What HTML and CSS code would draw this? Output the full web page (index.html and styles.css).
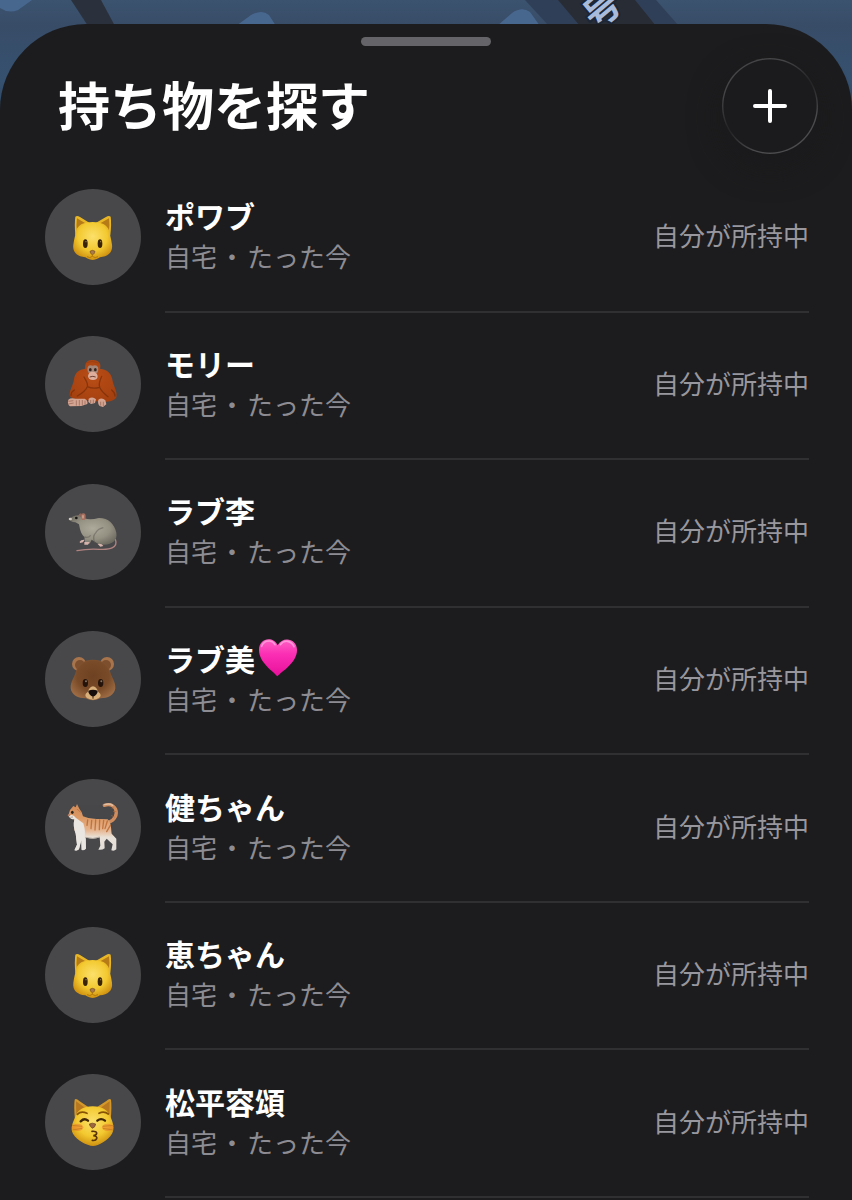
FILE: index.html
```html
<!DOCTYPE html>
<html lang="ja">
<head>
<meta charset="utf-8">
<meta name="viewport" content="width=device-width, initial-scale=1">
<title>持ち物を探す</title>
<link rel="stylesheet" href="styles.css">
</head>
<body>
<svg class="defs" aria-hidden="true">
  <defs>
    <radialGradient id="gold" cx=".5" cy=".38" r=".62"><stop offset="0" stop-color="#fbe06a"/><stop offset=".6" stop-color="#f3c930"/><stop offset="1" stop-color="#cf900f"/></radialGradient>
    <radialGradient id="brown" cx=".5" cy=".4" r=".6"><stop offset="0" stop-color="#6d4122"/><stop offset=".6" stop-color="#7a4b28"/><stop offset="1" stop-color="#9c6b44"/></radialGradient>
    <radialGradient id="rust" cx=".5" cy=".4" r=".65"><stop offset="0" stop-color="#b94d16"/><stop offset="1" stop-color="#a4400f"/></radialGradient>
    <radialGradient id="fur" cx=".5" cy=".45" r=".6"><stop offset="0" stop-color="#aeaa9b"/><stop offset=".6" stop-color="#949082"/><stop offset="1" stop-color="#6d6a60"/></radialGradient>
    <linearGradient id="pink" x1="0" y1="0" x2="0" y2="1"><stop offset="0" stop-color="#ff62c5"/><stop offset=".4" stop-color="#fb2fb4"/><stop offset="1" stop-color="#e80f9c"/></linearGradient>
    <linearGradient id="ginger" x1="0" y1="0" x2="0" y2="1"><stop offset="0" stop-color="#d08a58"/><stop offset=".3" stop-color="#dd9a66"/><stop offset=".55" stop-color="#e6b48c"/><stop offset=".72" stop-color="#e9e2da"/><stop offset="1" stop-color="#e2ddd7"/></linearGradient>
  </defs>

  <symbol id="cat-face" viewBox="16 27 288 288">
    <path d="M107 110Q112 105 121 111L150 129L134 160L107 166Q104 130 107 110Z M213 110Q208 105 199 111L168 129L185 160L212 166Q216 130 213 110Z" fill="#e9b726"/>
    <path d="M112 115L141 132L112 158Q109 133 112 115Z M208 115L178 132L207 158Q211 133 208 115Z" fill="#b67b17"/>
    <path d="M159 126C186 126 202 134 208 151C211 166 215 177 217 194C220 219 204 229 181 232C172 238 165 240 159 240C153 240 146 238 137 232C113 229 98 218 101 194C103 177 107 166 110 151C116 134 132 126 159 126Z" fill="url(#gold)"/>
    <ellipse cx="137" cy="191" rx="7" ry="13" fill="#382306"/><ellipse cx="181" cy="191" rx="7" ry="13" fill="#382306"/>
    <circle cx="139" cy="185" r="2" fill="#9c8459"/><circle cx="183" cy="185" r="2" fill="#9c8459"/>
    <path d="M151 214Q158 208 166 214Q166 222 158 224Q151 221 151 214Z" fill="#a9794b" stroke="#76501f" stroke-width="2"/>
    <path d="M158 224V229M158 229Q151 236 142 230M158 229Q166 236 175 230" fill="none" stroke="#b67a0a" stroke-width="3"/>
  </symbol>

  <symbol id="orangutan" viewBox="16 20 288 288">
    <path d="M158 92C141 91 135 103 137 118C117 120 106 130 103 150C101 168 90 180 90 198C92 208 112 212 140 212L180 217C202 220 224 216 230 204C234 188 223 174 219 156C216 132 204 121 181 118C186 102 176 91 158 92Z" fill="url(#rust)"/>
    <path d="M133 143C140 155 146 162 143 172Q137 186 113 200M186 141C180 154 176 162 180 174Q186 188 205 202M143 172Q160 180 180 174M104 182Q94 188 94 198M216 182Q226 190 226 200" fill="none" stroke="#6e2807" stroke-width="4" stroke-linecap="round" opacity=".6"/>
    <path d="M140 100Q158 92 177 101" fill="none" stroke="#8f3d14" stroke-width="3" opacity=".6"/>
    <path d="M144 114Q147 105 159 109Q171 105 175 114Q178 126 171 132L149 133Q141 126 144 114Z" fill="#a58779"/>
    <ellipse cx="152" cy="121" rx="4" ry="5" fill="#33231c"/><ellipse cx="167" cy="121" rx="4" ry="5" fill="#33231c"/>
    <path d="M145 140Q147 127 159 127Q171 127 174 140Q174 152 160 152Q146 152 145 140Z" fill="#dcae9b"/>
    <path d="M150 143Q160 139 168 143" fill="none" stroke="#6f4033" stroke-width="3"/>
    <path d="M86 211Q93 204 108 208L135 208Q146 213 143 224L125 230L91 231Q82 224 86 211ZM147 208Q159 200 169 210L166 221L154 224L146 218ZM176 211Q187 203 197 213L200 225L190 233L180 230Q173 222 176 211Z" fill="#d5a594"/>
    <path d="M86 216L101 214M86 224L102 221M110 213V229M119 212V229M128 212V228M136 214V226M153 212V221M161 211V221M183 217V229M191 217V230" stroke="#94604f" stroke-width="2"/>
  </symbol>

  <symbol id="rat" viewBox="16 17 288 288">
    <path d="M227 183C236 208 212 215 179 213C151 211 133 213 112 217" fill="none" stroke="#b08380" stroke-width="4" stroke-linecap="round"/>
    <path d="M88 122Q100 112 117 111L134 120Q152 126 177 119C205 118 224 136 230 163C234 186 218 198 193 199L177 198L156 184L150 196H137L134 176C122 165 121 151 118 138L107 132Q91 131 88 122Z" fill="url(#fur)"/>
    <path d="M166 194Q156 176 169 162Q176 151 191 148M134 176Q145 180 153 171" fill="none" stroke="#5d5a53" stroke-width="4" opacity=".5"/>
    <path d="M116 113Q118 104 125 105L126 116Z" fill="#8d665a"/><ellipse cx="131" cy="115" rx="7" ry="10" fill="#a5705f"/><ellipse cx="130" cy="115" rx="3" ry="6" fill="#cb9b87"/>
    <circle cx="110" cy="119" r="4" fill="#171414"/><ellipse cx="92" cy="122" rx="5" ry="4" fill="#cfc6bd"/>
    <path d="M120 190Q124 183 135 184L130 192L121 194ZM134 191L150 191L145 199H134ZM174 197Q187 195 191 203L182 205Z" fill="#d5b3ab"/>
  </symbol>

  <symbol id="bear" viewBox="16 20 288 288">
    <circle cx="118" cy="119" r="21" fill="#a8744c"/><circle cx="202" cy="119" r="21" fill="#a8744c"/>
    <circle cx="121" cy="122" r="15" fill="#7d4f2e"/><circle cx="199" cy="122" r="15" fill="#7d4f2e"/>
    <path d="M160 106C188 106 206 120 212 144C216 160 228 172 227 192C224 213 204 222 182 222Q171 228 160 228Q149 228 138 222C116 222 96 213 93 192C92 172 104 160 108 144C114 120 132 106 160 106Z" fill="url(#brown)"/>
    <path d="M160 186Q170 187 176 203Q189 212 178 221Q160 232 142 221Q131 212 144 203Q150 187 160 186Z" fill="#d9b07a"/>
    <ellipse cx="137" cy="176" rx="8" ry="12" fill="#24130a"/><ellipse cx="183" cy="176" rx="8" ry="12" fill="#24130a"/>
    <circle cx="139" cy="171" r="3" fill="#85715f"/><circle cx="185" cy="171" r="3" fill="#85715f"/>
    <path d="M146 199Q160 193 174 199Q174 211 160 217Q146 211 146 199Z" fill="#160e0d"/><path d="M160 216V223" stroke="#38200f" stroke-width="3"/>
  </symbol>

  <symbol id="cat" viewBox="16 17 288 288">
    <path d="M207 147C225 141 234 124 228 108C221 94 207 92 194 96" fill="none" stroke="#cf8e60" stroke-width="10" stroke-linecap="round"/>
    <path d="M195 94Q208 89 219 96" fill="none" stroke="#e0bfa5" stroke-width="4" stroke-linecap="round"/>
    <path d="M101 98L108 102L112 92L119 106Q127 114 130 129Q151 139 180 137L204 138C216 149 214 170 216 181L230 196L230 228Q224 234 215 231L219 213L201 196L194 205L195 225Q187 231 176 229L182 217L180 192Q160 199 138 192L139 226Q133 232 126 230L125 200L118 228Q112 234 104 231L112 214L108 180Q99 160 104 138Q89 137 86 126L91 110Z" fill="url(#ginger)"/>
    <path d="M89 126Q102 122 108 133Q122 143 131 150Q139 177 134 192L138 196L138 225Q133 231 126 229L125 200L118 227Q112 233 105 230L112 214L108 181Q99 160 104 138Q91 138 87 127Z" fill="#e9e6e1"/>
    <path d="M144 140L142 156M156 141L154 166M168 140L166 170M180 140L179 169M192 141L189 166M203 143L196 166M212 156L201 175" stroke="#b9662f" stroke-width="4" stroke-linecap="round" opacity=".8"/>
    <path d="M113 108L122 116M222 101L217 106M229 115L221 114M224 131L216 127" stroke="#b9662f" stroke-width="3" stroke-linecap="round" opacity=".6"/>
    <ellipse cx="98" cy="117" rx="4" ry="5" fill="#2b261c"/><ellipse cx="88" cy="126" rx="4" ry="3" fill="#b9816b"/><path d="M92 132L100 131" stroke="#9e826e" stroke-width="2"/>
    <path d="M138 192Q160 199 180 191" fill="none" stroke="#b5aca3" stroke-width="3"/>
  </symbol>

  <symbol id="kissing-cat" viewBox="16 24 288 288">
    <path d="M105 101Q109 96 119 105L147 124L131 152L106 162Q102 120 105 101Z M214 101Q210 96 200 105L171 124L188 152L213 162Q217 120 214 101Z" fill="#d39829"/>
    <path d="M109 106L138 127L110 153Z M210 106L181 127L209 153Z" fill="#b8781f"/>
    <path d="M159 121C188 121 205 133 212 152C220 168 226 188 217 203C205 223 177 239 160 240C141 238 112 223 100 203C91 187 99 170 107 152C114 133 130 121 159 121Z" fill="url(#gold)"/>
    <ellipse cx="114" cy="184" rx="17" ry="11" fill="#e9752f" opacity=".5"/><ellipse cx="204" cy="184" rx="17" ry="11" fill="#e9752f" opacity=".5"/>
    <path d="M113 145Q124 134 142 142M178 142Q193 134 206 144" fill="none" stroke="#865307" stroke-width="5" stroke-linecap="round"/>
    <path d="M123 166Q134 155 145 164M173 164Q184 155 196 164" fill="none" stroke="#3f2707" stroke-width="7" stroke-linecap="round"/>
    <path d="M97 178L127 181M98 192L127 187M189 181L222 178M190 187L220 192" stroke="#bd761f" stroke-width="2"/>
    <path d="M149 174Q158 169 168 174Q167 184 158 187Q150 182 149 174Z" fill="#9b6640" stroke="#6b4521" stroke-width="2"/>
    <path d="M157 196Q172 195 171 202Q170 208 161 209Q174 211 171 218Q168 225 158 223" fill="none" stroke="#593309" stroke-width="5" stroke-linecap="round"/>
  </symbol>
</svg>

<svg class="map" viewBox="0 0 852 160" preserveAspectRatio="none" aria-hidden="true">
  <defs><linearGradient id="sea" x1="0" y1="0" x2="0" y2="1"><stop offset="0" stop-color="#3b536f"/><stop offset=".16" stop-color="#384c67"/><stop offset=".5" stop-color="#35516f"/><stop offset="1" stop-color="#293b54"/></linearGradient></defs>
  <path fill="url(#sea)" d="M0 0H852V160H0Z"/>
  <path fill="#48678f" d="M0 0H32L18 10Q9 14 0 8ZM236 26L251 15Q262 9 269 15L276 26ZM497 26L512 13Q522 6 530 12L540 26Z"/>
  <path fill="#2a313c" d="M71 0H101L115 26H88Z"/>
  <path fill="#303f58" d="M525 0H656L679 26H549Z"/>
  <path fill="#282c35" d="M558 0H635L656 26H580Z"/>
  <text class="map-label" x="600" y="7" transform="rotate(-40 600 7)" text-anchor="middle" dominant-baseline="central">号</text>
</svg>

<main class="sheet">
  <div class="handle"></div>
  <header class="header">
    <h1 class="title">持ち物を探す</h1>
    <button class="add" type="button" aria-label="持ち物を追加">
      <svg class="plus" viewBox="0 0 36 36" aria-hidden="true"><path d="M18 3V33M3 18H33" fill="none" stroke="#fff" stroke-width="4" stroke-linecap="round"/></svg>
    </button>
  </header>
  <ul class="items">
    <li class="item"><svg class="avatar" aria-hidden="true"><use href="#cat-face"/></svg><div class="body"><div class="info"><h2 class="name">ポワブ</h2><p class="place"><span>自宅</span><span>・</span><span>たった今</span></p></div><p class="status">自分が所持中</p></div></li>
    <li class="item"><svg class="avatar" aria-hidden="true"><use href="#orangutan"/></svg><div class="body"><div class="info"><h2 class="name">モリー</h2><p class="place"><span>自宅</span><span>・</span><span>たった今</span></p></div><p class="status">自分が所持中</p></div></li>
    <li class="item"><svg class="avatar" aria-hidden="true"><use href="#rat"/></svg><div class="body"><div class="info"><h2 class="name">ラブ李</h2><p class="place"><span>自宅</span><span>・</span><span>たった今</span></p></div><p class="status">自分が所持中</p></div></li>
    <li class="item"><svg class="avatar" aria-hidden="true"><use href="#bear"/></svg><div class="body"><div class="info"><h2 class="name">ラブ美<svg class="heart" viewBox="657 47 120 120" aria-hidden="true"><path d="M715 162C705 148 660 122 660 83C660 47 702 40 716 69C731 40 774 48 774 83C774 122 727 148 715 162Z" fill="url(#pink)"/><path d="M668 72Q674 55 692 56Q703 57 708 67M724 67Q732 55 746 57Q760 60 765 73" fill="none" stroke="#ffb1e4" stroke-width="5" stroke-linecap="round" opacity=".7"/></svg></h2><p class="place"><span>自宅</span><span>・</span><span>たった今</span></p></div><p class="status">自分が所持中</p></div></li>
    <li class="item"><svg class="avatar" aria-hidden="true"><use href="#cat"/></svg><div class="body"><div class="info"><h2 class="name">健ちゃん</h2><p class="place"><span>自宅</span><span>・</span><span>たった今</span></p></div><p class="status">自分が所持中</p></div></li>
    <li class="item"><svg class="avatar" aria-hidden="true"><use href="#cat-face"/></svg><div class="body"><div class="info"><h2 class="name">恵ちゃん</h2><p class="place"><span>自宅</span><span>・</span><span>たった今</span></p></div><p class="status">自分が所持中</p></div></li>
    <li class="item"><svg class="avatar" aria-hidden="true"><use href="#kissing-cat"/></svg><div class="body"><div class="info"><h2 class="name">松平容頌</h2><p class="place"><span>自宅</span><span>・</span><span>たった今</span></p></div><p class="status">自分が所持中</p></div></li>
  </ul>
</main>
</body>
</html>
```
FILE: styles.css
```css
* { box-sizing: border-box; }

body {
  margin: 0;
  min-height: 100vh;
  padding-top: 24px;
  display: flex;
  flex-direction: column;
  background: #1c1c1e;
  color: #fff;
  font-family: "Noto Sans CJK JP", sans-serif;
}

h1, h2, p, ul { margin: 0; padding: 0; }

.defs { position: absolute; width: 0; height: 0; }

/* The map lies behind the sheet and shows around its rounded top. */
.map {
  position: absolute;
  top: 0;
  left: 0;
  width: 100%;
  height: 160px;
}

.map-label {
  font-size: 36px;
  font-weight: 700;
  fill: #a9bbda;
  stroke: #1b2636;
  stroke-width: 4px;
  paint-order: stroke;
}

.sheet {
  position: relative;
  flex: 1;
  display: flex;
  flex-direction: column;
  padding-bottom: 2px;
  background: #1c1c1e;
  border-radius: 86px 86px 0 0;
}

.handle {
  width: 130px;
  height: 9px;
  margin: 13px auto 12px;
  border-radius: 5px;
  background: #656468;
}

.header {
  display: flex;
  align-items: center;
  justify-content: space-between;
  padding: 0 34px 11px 58px;
}

.title {
  padding-bottom: 5px;
  font-size: 52px;
  line-height: 72px;
  font-weight: 700;
}

.add {
  display: grid;
  place-items: center;
  width: 96px;
  height: 96px;
  padding: 2px;
  border: 0;
  border-radius: 50%;
  background:
    radial-gradient(circle closest-side, #1b1b1d 96%, transparent 98%),
    linear-gradient(150deg, #454547 25%, #262628 48%, #262628 52%, #4c4c4e 75%);
  box-shadow: 0 12px 32px #1a1a1c;
}

.plus { width: 36px; height: 36px; }

.items {
  flex: 1;
  display: grid;
  grid-template-rows: repeat(7, minmax(128px, 1fr));
  list-style: none;
}

.item {
  display: flex;
  align-items: center;
  gap: 24px;
  padding: 0 43px 0 45px;
}

.avatar {
  flex: none;
  width: 96px;
  height: 96px;
  margin-bottom: 4px;
  border-radius: 50%;
  background: #48484a;
}

.body {
  flex: 1;
  align-self: stretch;
  display: flex;
  align-items: center;
  justify-content: space-between;
  padding-bottom: 3px;
  border-bottom: 2px solid #303033;
}

.name {
  display: flex;
  align-items: center;
  gap: 3px;
  font-size: 30px;
  line-height: 40px;
  font-weight: 700;
}

.heart { width: 40px; height: 40px; }

.place {
  display: flex;
  gap: 2px;
  font-size: 26px;
  line-height: 42px;
  color: #8d8c93;
}

.status {
  padding-bottom: 2px;
  font-size: 26px;
  line-height: 42px;
  color: #98979e;
}
```
